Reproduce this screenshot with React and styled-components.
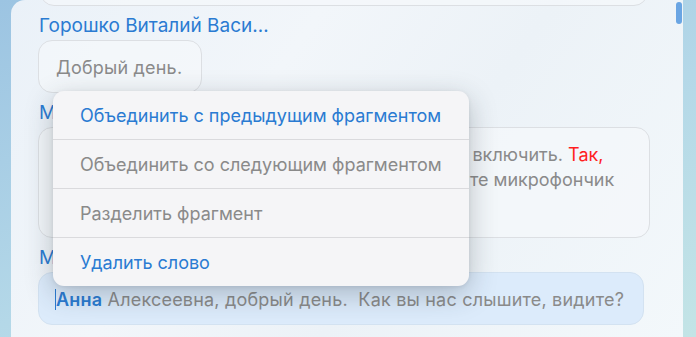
import React from "react";
import styled, { createGlobalStyle } from "styled-components";

const GlobalStyle = createGlobalStyle`
  html, body {
    margin: 0;
    padding: 0;
    width: 696px;
    height: 337px;
    overflow: hidden;
  }
  body {
    font-family: Inter, "Noto Sans", sans-serif;
    background: linear-gradient(160deg, #9cc4e2 0%, #b4d8e8 55%, #c3e4e6 100%);
  }
`;

const Screen = styled.div`
  display: flex;
  height: 337px;
  padding-left: 11px;
  padding-right: 13px;
`;

const Panel = styled.div`
  position: relative;
  flex: 1;
  display: flex;
  background: linear-gradient(125deg, #eaf1f8 0%, #f2f6fa 35%, #ecf2f7 60%, #f3f8fb 100%);
  border-radius: 14px 0 0 0;
  overflow: hidden;
`;

const Feed = styled.div`
  flex: 1;
  display: flex;
  flex-direction: column;
  align-items: flex-start;
  padding: 0 0 0 27px;
`;

const Scrollbar = styled.div`
  width: 6px;
  padding-top: 2px;
  margin-right: 1px;
`;

const Thumb = styled.div`
  height: 22px;
  border-radius: 3px;
  background: #6aa5e3;
`;

const Speaker = styled.div`
  font-size: 19px;
  line-height: 22px;
  color: #2a7bd2;
  margin: 9px 0 3px 1px;
  white-space: nowrap;
`;

const Bubble = styled.div`
  box-sizing: border-box;
  width: ${(p) => (p.$wide ? "612px" : "fit-content")};
  max-width: 612px;
  padding: 14px 19px ${(p) => p.$bottom || 12}px 17px;
  border-radius: 14px;
  border: 1px solid ${(p) => (p.$active ? "#d3e2f1" : "#dcdfe3")};
  background: ${(p) => (p.$active ? "#dcebfb" : "rgba(245, 248, 251, 0.7)")};
  font-size: 18px;
  line-height: 25px;
  letter-spacing: ${(p) => (p.$wide ? 0 : 0.2)}px;
  color: #8a8a8a;
  white-space: nowrap;
`;

const TopBubble = styled(Bubble)`
  margin-top: -48px;
  margin-left: 2px;
  width: 608px;
  height: 54px;
`;

const Red = styled.span`
  color: #ff1f1f;
`;

const Word = styled.span`
  color: #2a7bd2;
  font-weight: 600;
  border-left: 1.5px solid #2a7bd2;
  margin-left: -1px;
`;

const Menu = styled.div`
  position: absolute;
  left: 42px;
  top: 91px;
  width: 416px;
  border-radius: 11px;
  background: #f5f5f7;
  box-shadow: 0 8px 28px rgba(40, 50, 60, 0.28), 0 1px 4px rgba(0, 0, 0, 0.08);
  overflow: hidden;
`;

const MenuItem = styled.div`
  height: 48px;
  display: flex;
  align-items: center;
  padding-left: 27px;
  font-size: 18px;
  color: ${(p) => (p.$accent ? "#2a7bd2" : "#8a8a8a")};
  & + & {
    border-top: 1px solid #dadadd;
  }
`;

export default function App() {
  return (
    <>
      <GlobalStyle />
      <Screen>
        <Panel>
          <Feed>
            <TopBubble />
            <Speaker>Горошко Виталий Васи…</Speaker>
            <Bubble>Добрый день.</Bubble>
            <Speaker>Модератор</Speaker>
            <Bubble $wide $bottom={20}>
              Сейчас мы ещё раз попробуем вас всех тоже&nbsp; включить. <Red>Так,</Red>
              <br />
              Михаил Юрьевич, пожалуйста, скорее включите микрофончик
              <br />
              ещё раз.
            </Bubble>
            <Speaker>Модератор</Speaker>
            <Bubble $active>
              <Word>Анна</Word> Алексеевна, добрый день.&nbsp; Как вы нас слышите, видите?
            </Bubble>
          </Feed>
          <Scrollbar>
            <Thumb />
          </Scrollbar>
          <Menu>
            <MenuItem $accent>Объединить с предыдущим фрагментом</MenuItem>
            <MenuItem>Объединить со следующим фрагментом</MenuItem>
            <MenuItem>Разделить фрагмент</MenuItem>
            <MenuItem $accent>Удалить слово</MenuItem>
          </Menu>
        </Panel>
      </Screen>
    </>
  );
}
